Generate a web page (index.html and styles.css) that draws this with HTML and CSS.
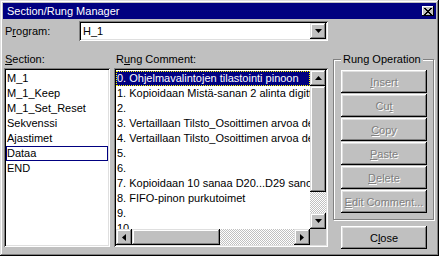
FILE: index.html
```html
<!DOCTYPE html>
<html lang="fi">
<head>
    <meta charset="UTF-8">
    <title>Section/Rung Manager</title>
    <link rel="stylesheet" href="styles.css">
</head>
<body>
    <div class="window">
        <!-- Caption -->
        <div class="titlebar">
            <span>Section/Rung Manager</span>
            <span class="title-close">
                <svg width="8" height="7" viewBox="0 0 8 7"><path d="M0 0h2v1h1v1h2V1h1V0h2v1H7v1H6v1H5v1h1v1h1v1h1v1H6V6H5V5H3v1H2v1H0V6h1V5h1V4h1V3H2V2H1V1H0z" fill="#000"/></svg>
            </span>
        </div>

        <div class="content">
            <!-- Program selector -->
            <div class="program-row">
                <label class="program-label">P<u>r</u>ogram:</label>
                <div class="combo">
                    <span class="combo-text">H_1</span>
                    <span class="arrow-btn combo-btn">
                        <svg width="7" height="4" viewBox="0 0 7 4"><path d="M0 0h7L3.5 4z" fill="#000"/></svg>
                    </span>
                </div>
            </div>

            <div class="main-row">
                <!-- Sections -->
                <div class="section-col">
                    <div class="caption"><u>S</u>ection:</div>
                    <div class="listbox section-list">
                        <div class="row">M_1</div>
                        <div class="row">M_1_Keep</div>
                        <div class="row">M_1_Set_Reset</div>
                        <div class="row">Sekvenssi</div>
                        <div class="row">Ajastimet</div>
                        <div class="row current">Dataa</div>
                        <div class="row">END</div>
                    </div>
                </div>

                <!-- Rung comments -->
                <div class="rung-col">
                    <div class="caption">R<u>u</u>ng Comment:</div>
                    <div class="listbox rung-list">
                        <div class="rung-rows">
                            <div class="row selected">0. Ohjelmavalintojen tilastointi pinoon</div>
                            <div class="row">1. Kopioidaan Mistä-sanan 2 alinta digittiä muistiin</div>
                            <div class="row">2.</div>
                            <div class="row">3. Vertaillaan Tilsto_Osoittimen arvoa desimaaliin</div>
                            <div class="row">4. Vertaillaan Tilsto_Osoittimen arvoa desimaaliin</div>
                            <div class="row">5.</div>
                            <div class="row">6.</div>
                            <div class="row">7. Kopioidaan 10 sanaa D20...D29 sanoihin</div>
                            <div class="row">8. FIFO-pinon purkutoimet</div>
                            <div class="row">9.</div>
                            <div class="row">10.</div>
                        </div>
                        <div class="vscroll">
                            <span class="arrow-btn">
                                <svg width="7" height="4" viewBox="0 0 7 4"><path d="M3.5 0L7 4H0z" fill="#000"/></svg>
                            </span>
                            <span class="thumb vthumb"></span>
                            <span class="track"></span>
                            <span class="arrow-btn">
                                <svg width="7" height="4" viewBox="0 0 7 4"><path d="M0 0h7L3.5 4z" fill="#000"/></svg>
                            </span>
                        </div>
                        <div class="hscroll">
                            <span class="arrow-btn">
                                <svg width="4" height="7" viewBox="0 0 4 7"><path d="M0 3.5L4 0v7z" fill="#000"/></svg>
                            </span>
                            <span class="thumb hthumb"></span>
                            <span class="track"></span>
                            <span class="arrow-btn">
                                <svg width="4" height="7" viewBox="0 0 4 7"><path d="M4 3.5L0 0v7z" fill="#000"/></svg>
                            </span>
                        </div>
                        <div class="corner"></div>
                    </div>
                </div>

                <!-- Operations -->
                <div class="ops-col">
                    <fieldset class="group">
                        <legend>Rung Operation</legend>
                        <button class="btn" disabled><u>I</u>nsert</button>
                        <button class="btn" disabled>Cu<u>t</u></button>
                        <button class="btn" disabled><u>C</u>opy</button>
                        <button class="btn" disabled><u>P</u>aste</button>
                        <button class="btn" disabled><u>D</u>elete</button>
                        <button class="btn" disabled><u>E</u>dit Comment...</button>
                    </fieldset>
                    <button class="btn close-btn">C<u>l</u>ose</button>
                </div>
            </div>
        </div>
    </div>
</body>
</html>
```

FILE: styles.css
```css
/* Reset */
* {
    margin: 0;
    padding: 0;
    box-sizing: border-box;
}

:root {
    --face: #c0c0c0;
    --shadow: #808080;
    --light: #dfdfdf;
    --navy: #000080;
}

html, body {
    width: 439px;
    height: 256px;
    overflow: hidden;
    font-family: 'Liberation Sans', Arial, sans-serif;
    font-size: 11px;
    color: #000;
    background: var(--face);
}

u {
    text-underline-offset: 1px;
}

/* Window frame */
.window {
    width: 439px;
    height: 256px;
    padding: 3px;
    background: var(--face);
    box-shadow: inset -1px -1px #000, inset 1px 1px var(--light),
                inset -2px -2px var(--shadow), inset 2px 2px #fff;
    display: flex;
    flex-direction: column;
}

.titlebar {
    height: 16px;
    background: var(--navy);
    color: #fff;
    font-size: 11px;
    padding: 0 2px 0 4px;
    display: flex;
    align-items: center;
    justify-content: space-between;
}

.title-close {
    width: 12px;
    height: 10px;
    background: var(--face);
    box-shadow: inset -1px -1px #000, inset 1px 1px #fff;
    display: flex;
    align-items: center;
    justify-content: center;
}

.content {
    padding: 0 2px 0 1px;
}

/* Program row */
.program-row {
    margin-top: 2px;
    height: 20px;
    display: flex;
    align-items: center;
}

.program-label {
    width: 75px;
    padding-left: 1px;
}

.combo {
    width: 249px;
    height: 20px;
    background: #fff;
    padding: 2px;
    box-shadow: inset 1px 1px var(--shadow), inset -1px -1px #fff,
                inset 2px 2px #000, inset -2px -2px var(--light);
    display: flex;
    align-items: center;
    justify-content: space-between;
}

.combo-text {
    padding-left: 2px;
}

.arrow-btn {
    width: 16px;
    height: 16px;
    flex: none;
    background: var(--face);
    box-shadow: inset -1px -1px #000, inset 1px 1px var(--light),
                inset -2px -2px var(--shadow), inset 2px 2px #fff;
    display: flex;
    align-items: center;
    justify-content: center;
}

/* Main area */
.main-row {
    margin-top: 12px;
    display: flex;
    align-items: flex-start;
}

.caption {
    height: 15px;
    line-height: 13px;
    padding-left: 1px;
}

.section-col {
    width: 106px;
    margin-right: 4px;
}

.rung-col {
    width: 214px;
    margin-right: 5px;
}

.rung-col .caption {
    padding-left: 2px;
}

.ops-col {
    width: 101px;
}

.listbox {
    height: 179px;
    background: #fff;
    box-shadow: inset 1px 1px var(--shadow), inset -1px -1px #fff,
                inset 2px 2px #000, inset -2px -2px var(--light);
}

.section-list {
    padding: 3px 2px 2px;
}

.row {
    height: 15px;
    line-height: 15px;
    padding-left: 1px;
    white-space: nowrap;
}

.current {
    box-shadow: inset 0 0 0 1px var(--navy);
}

.rung-list {
    padding: 2px;
    display: grid;
    grid-template-columns: 1fr 16px;
    grid-template-rows: 1fr 16px;
}

.rung-rows {
    overflow: hidden;
    padding-top: 1px;
}

.rung-rows .row {
    padding-left: 1px;
}

.selected {
    background: var(--navy);
    color: #fff;
    outline: 1px dotted #ff0;
    outline-offset: -1px;
}

.vscroll {
    display: flex;
    flex-direction: column;
}

.hscroll {
    display: flex;
}

.thumb {
    background: var(--face);
    box-shadow: inset -1px -1px #000, inset 1px 1px var(--light),
                inset -2px -2px var(--shadow), inset 2px 2px #fff;
}

.vthumb {
    height: 106px;
}

.hthumb {
    width: 88px;
}

.track {
    flex: 1;
    background: repeating-conic-gradient(var(--face) 0 25%, #fff 0 50%) 0 0 / 2px 2px;
}

.corner {
    background: var(--face);
}

/* Rung Operation group */
.group {
    border: 1px solid var(--shadow);
    box-shadow: inset 1px 1px #fff, 1px 1px #fff;
    padding: 4px 6px 6px 7px;
    display: flex;
    flex-direction: column;
    gap: 1px;
}

.group legend {
    line-height: 13px;
    padding: 0 2px;
    background: var(--face);
}

.btn {
    width: 86px;
    height: 23px;
    border: 0;
    font: inherit;
    color: #000;
    background: var(--face);
    box-shadow: inset -1px -1px #000, inset 1px 1px #fff,
                inset -2px -2px var(--shadow), inset 2px 2px var(--light);
}

.btn:disabled {
    color: var(--shadow);
    text-shadow: 1px 1px 0 #fff;
}

.close-btn {
    margin: 6px 0 0 8px;
}
```
